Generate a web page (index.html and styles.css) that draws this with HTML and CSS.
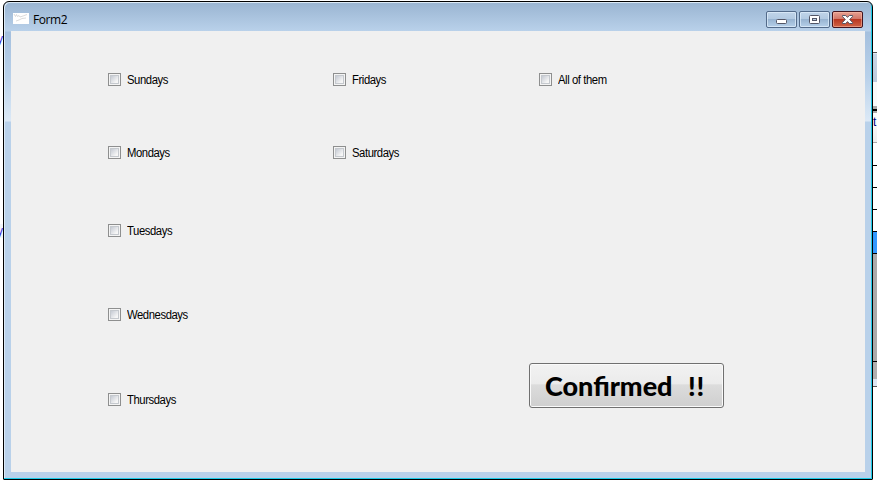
FILE: index.html
```html
<!DOCTYPE html>
<html lang="en">
<head>
<meta charset="utf-8">
<title>Form2</title>
<link rel="stylesheet" href="styles.css">
</head>
<body>
<div class="desktop">
  <div class="behind-left"><span>y</span><span class="soft">y</span></div>
  <div class="behind-right">
    <i class="dark"></i><i class="toolbar"></i><i class="blank"></i><i class="gray"></i><i class="head">t</i>
    <i class="row first"></i><i class="row"></i><i class="row"></i><i class="row"></i><i class="row selected"></i><i class="empty"></i><i class="scroll"></i><i class="status"></i>
  </div>
  <main class="window">
    <header class="titlebar">
      <svg class="app-icon" width="16" height="11" viewBox="0 0 16 11"><path fill="#fff" d="M0 0h16v11H0z"/><path d="M1 1l1.500 2.500 1-2 1 2 1.500-1 1 1.500 3-1 4-1.500M3 8l3-1 3-1.500 4-.500" fill="none" stroke="#ccc" stroke-width=".7"/></svg>
      <h1>Form2</h1>
      <div class="controls">
        <button class="control" aria-label="Minimize"><svg width="29" height="15" viewBox="0 0 29 15"><rect x="9.500" y="7.500" width="10" height="4" rx="1" fill="#fff" stroke="#535666"/></svg></button>
        <button class="control" aria-label="Maximize"><svg width="29" height="15" viewBox="0 0 29 15"><rect x="9.500" y="3.500" width="10" height="8" rx="1" fill="#fff" stroke="#535666"/><rect x="12.500" y="6.500" width="4" height="2" fill="#b9cde2" stroke="#535666"/></svg></button>
        <button class="control close" aria-label="Close"><svg width="29" height="15" viewBox="0 0 29 15"><path d="M9.500 3.500h3.200l1.800 1.900 1.800-1.900h3.200v1.100l-2.800 2.900 2.800 2.900v1.100h-3.200l-1.800-1.900-1.800 1.900H9.500v-1.100l2.800-2.900-2.800-2.900z" fill="#fff" stroke="#535666"/></svg></button>
      </div>
    </header>
    <section class="form">
      <label class="sunday"><input type="checkbox"><span>Sundays</span></label>
      <label class="friday"><input type="checkbox"><span>Fridays</span></label>
      <label class="all"><input type="checkbox"><span>All of them</span></label>
      <label class="monday"><input type="checkbox"><span>Mondays</span></label>
      <label class="saturday"><input type="checkbox"><span>Saturdays</span></label>
      <label class="tuesday"><input type="checkbox"><span>Tuesdays</span></label>
      <label class="wednesday"><input type="checkbox"><span>Wednesdays</span></label>
      <label class="thursday"><input type="checkbox"><span>Thursdays</span></label>
      <button class="confirm"><span>Confirmed</span> <span class="marks">!!</span></button>
    </section>
  </main>
</div>
</body>
</html>
```
FILE: styles.css
```css
* { box-sizing: border-box; }
body { margin: 0; background: #fff; overflow: hidden; }
.desktop { position: relative; display: flex; justify-content: space-between; width: 877px; height: 489px; overflow: hidden; background: #fff; }
.behind-left { width: 3px; padding-top: 32px; overflow: hidden; font: 12px/14px "Liberation Sans", sans-serif; color: #3a2bdc; }
.behind-left span { display: flex; justify-content: flex-end; width: 3px; height: 14px; margin-bottom: 178px; }
.behind-left .soft { background: #f3f5fa; margin: 0; }
.behind-right { display: flex; flex-direction: column; width: 4px; padding-top: 52px; overflow: hidden; }
.behind-right i { flex: none; display: block; font-style: normal; }
.behind-right .dark { height: 1px; background: #555; }
.behind-right .toolbar { height: 29px; background: linear-gradient(#c9d5e4, #bccbdd); border-top: 1px solid #e2e8f0; }
.behind-right .blank { height: 24px; background: #fafafa; }
.behind-right .gray { height: 5px; border-top: 3px solid #aaa; border-bottom: 2px solid #000; }
.behind-right .head { height: 32px; border-top: 2px solid #aaa; border-bottom: 1px solid #aaa; background: linear-gradient(#fff, #eee); font: 12px/18px "Liberation Sans", sans-serif; color: #00007c; }
.behind-right .row { height: 22px; border-bottom: 1px solid #000; background: #fff; }
.behind-right .first { height: 23px; }
.behind-right .row.selected { background: #3399ff; }
.behind-right .empty { height: 108px; border-bottom: 1px solid #000; background: #ababab; }
.behind-right .scroll { height: 17px; background: #b0b0b0; }
.behind-right .status { height: 8px; background: #dce6f2; border-bottom: 1px solid #555; }

.window {
  position: absolute; left: 3px; top: 1px; width: 870px; height: 479px;
  display: flex; flex-direction: column; padding: 0 6px 7px 7px;
  border: 1px solid #000; border-radius: 6px 6px 1px 1px;
  background: linear-gradient(#99b4d1 0, #b9d1ea 29px, #a5c0de 30px, #b9d1ea 75px, #dce9f6 119px, #b9d1ea 120px);
  box-shadow: inset -1px -1px #1ccbe8, inset 1px 1px #dceaf6;
}
.titlebar { display: flex; align-items: flex-start; height: 29px; flex: none; margin: 0 -1px; padding-left: 3px; }
.app-icon { margin-top: 11px; }
.titlebar h1 { margin: 10px 0 0 4px; font: 12px/16px "Open Sans", sans-serif; letter-spacing: -.4px; color: #000; }
.controls { display: flex; gap: 2px; margin: 9px 4px 0 auto; }
.control {
  width: 31px; height: 17px; padding: 0; border: 1px solid #536b8a; border-radius: 2px;
  background: linear-gradient(#c0d4e9 0, #b3cae2 45%, #98b4d1 50%, #b6d0e9 100%);
  box-shadow: inset 0 0 0 1px rgba(225,239,252,.7);
}
.control svg { display: block; }
.control.close { border-color: #43141e; background: linear-gradient(#e6a092 0, #d37768 45%, #b93822 50%, #cf6346 100%); box-shadow: inset 0 0 0 1px rgba(255,196,174,.5); }
.form {
  flex: 1; width: 854px; padding: 42px 0 0 97px; background: #f0f0f0;
  display: grid; grid-template-columns: 225px 196px 1fr; grid-template-rows: 73px 78px 84px 49px 1fr;
  align-items: start;
}
label { display: flex; align-items: center; height: 13px; font: 12px/13px "Liberation Sans", sans-serif; letter-spacing: -.45px; color: #000; white-space: nowrap; }
label span { padding-top: 2px; transform: scaleX(.94); transform-origin: left; }
input { appearance: none; flex: none; width: 13px; height: 13px; margin: 0 6px 0 0; border: 1px solid #8e8f8f; background: linear-gradient(135deg, #c5cad3, #f6f6f6 80%) content-box, #f4f4f4; padding: 2px; outline: 1px solid #c5c9ce; outline-offset: -3px; }
.sunday, .monday, .tuesday, .wednesday, .thursday { grid-column: 1; }
.friday, .saturday { grid-column: 2; }
.all { grid-column: 3; margin-left: 10px; }
.sunday, .friday, .all { grid-row: 1; }
.monday, .saturday { grid-row: 2; }
.tuesday { grid-row: 3; }
.wednesday { grid-row: 4; }
.thursday { grid-row: 5; margin-top: 36px; }
.confirm {
  grid-column: 3; grid-row: 5; width: 195px; height: 45px; margin-top: 6px; padding: 0 0 0 15px;
  display: flex; justify-content: flex-start; align-items: center;
  border: 1px solid #707070; border-radius: 3px; white-space: nowrap;
  background: linear-gradient(#f2f2f2 0, #ebebeb 47%, #dcdcdc 48%, #cfcfcf 100%);
  box-shadow: inset 0 0 0 1px #fafafa; color: #000; font: 900 27px/43px Lato, sans-serif;
}
.confirm span { width: 143px; text-align: left; }
.confirm .marks { width: auto; letter-spacing: .8px; }
```
